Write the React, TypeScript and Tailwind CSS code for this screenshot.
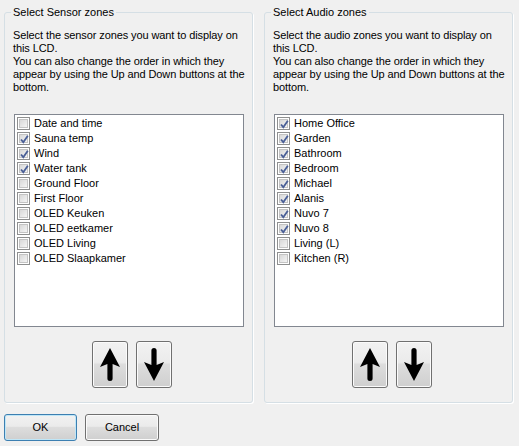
import React, { useState } from 'react';

interface Zone {
  name: string;
  checked: boolean;
}

const sensorZones: Zone[] = [
  { name: 'Date and time', checked: false },
  { name: 'Sauna temp', checked: true },
  { name: 'Wind', checked: true },
  { name: 'Water tank', checked: true },
  { name: 'Ground Floor', checked: false },
  { name: 'First Floor', checked: false },
  { name: 'OLED Keuken', checked: false },
  { name: 'OLED eetkamer', checked: false },
  { name: 'OLED Living', checked: false },
  { name: 'OLED Slaapkamer', checked: false },
];

const audioZones: Zone[] = [
  { name: 'Home Office', checked: true },
  { name: 'Garden', checked: true },
  { name: 'Bathroom', checked: true },
  { name: 'Bedroom', checked: true },
  { name: 'Michael', checked: true },
  { name: 'Alanis', checked: true },
  { name: 'Nuvo 7', checked: true },
  { name: 'Nuvo 8', checked: true },
  { name: 'Living (L)', checked: false },
  { name: 'Kitchen (R)', checked: false },
];

const btnFace =
  'bg-[linear-gradient(to_bottom,#f2f2f2_0%,#ebebeb_45%,#dddddd_50%,#cfcfcf_100%)] shadow-[inset_0_0_0_1px_#fbfbfb]';

const CheckBox: React.FC<{ checked: boolean; onClick: () => void }> = ({ checked, onClick }) => (
  <span
    onClick={onClick}
    className="relative w-[13px] h-[13px] border border-[#8e8f8f] bg-white flex-shrink-0 flex items-center justify-center"
  >
    <span className="w-[9px] h-[9px] border border-[#c4c4c4] bg-[linear-gradient(135deg,#d8d8d8_0%,#f4f4f4_100%)]" />
    {checked && (
      <svg className="absolute left-[1px] top-[1px]" width="11" height="11" viewBox="0 0 11 11">
        <path d="M2 5.5 L4.3 8.2 L8.8 1.8" fill="none" stroke="#4a5f97" strokeWidth="1.8" />
      </svg>
    )}
  </span>
);

const UpArrow = () => (
  <svg width="20" height="33" viewBox="0 0 20 33">
    <path d="M10 0 L20 19 L12.6 16 L12.6 30.5 Q12.6 33 10 33 Q7.4 33 7.4 30.5 L7.4 16 L0 19 Z" fill="#000" />
  </svg>
);

const DownArrow = () => (
  <svg width="20" height="33" viewBox="0 0 20 33">
    <path d="M10 33 L20 14 L12.6 17 L12.6 2.5 Q12.6 0 10 0 Q7.4 0 7.4 2.5 L7.4 17 L0 14 Z" fill="#000" />
  </svg>
);

const ZoneGroup: React.FC<{ title: string; kind: string; initial: Zone[] }> = ({ title, kind, initial }) => {
  const [zones, setZones] = useState<Zone[]>(initial);

  const toggle = (i: number) =>
    setZones((prev) => prev.map((z, idx) => (idx === i ? { ...z, checked: !z.checked } : z)));

  return (
    <fieldset className="w-[249px] h-[397px] border border-[#d5dfe5] rounded-[3px] px-0 m-0 shadow-[1px_1px_0_#ffffff]">
      <legend className="ml-[6px] px-[2px] leading-[13px]">{title}</legend>

      {/* description */}
      <p className="mt-[10px] pl-[8px] leading-[13px] tracking-[-0.1px]">
        Select the {kind} zones you want to display on
        <br />
        this LCD.
        <br />
        You can also change the order in which they
        <br />
        appear by using the Up and Down buttons at the
        <br />
        bottom.
      </p>

      {/* list */}
      <div className="mt-[20px] ml-[9px] w-[230px] h-[213px] border border-[#828790] bg-white pt-[1px]">
        {zones.map((z, i) => (
          <div key={z.name} className="h-[15px] flex items-center pl-[2px] gap-[4px] leading-[15px]">
            <CheckBox checked={z.checked} onClick={() => toggle(i)} />
            <span className="text-black">{z.name}</span>
          </div>
        ))}
      </div>

      {/* up / down */}
      <div className="mt-[14px] pl-[87px] flex gap-[8px]">
        <button className={`w-[36px] h-[47px] border border-[#707070] rounded-[3px] flex items-center justify-center ${btnFace}`}>
          <UpArrow />
        </button>
        <button className={`w-[36px] h-[47px] border border-[#707070] rounded-[3px] flex items-center justify-center ${btnFace}`}>
          <DownArrow />
        </button>
      </div>
    </fieldset>
  );
};

export default function App() {
  return (
    <div className="w-[519px] h-[446px] bg-[#f0f0f0] text-[11px] text-black font-['Liberation_Sans',Arial,sans-serif] pl-[4px] pt-[6px]">
      <div className="flex gap-[11px]">
        <ZoneGroup title="Select Sensor zones" kind="sensor" initial={sensorZones} />
        <ZoneGroup title="Select Audio zones" kind="audio" initial={audioZones} />
      </div>

      <div className="mt-[11px] flex gap-[8px]">
        <button
          className="w-[73px] h-[27px] border border-[#3c7fb1] rounded-[3px] bg-[linear-gradient(to_bottom,#f2f2f2_0%,#ebebeb_45%,#dddddd_50%,#cfcfcf_100%)] shadow-[inset_0_0_0_1px_#bfe6f7]"
        >
          OK
        </button>
        <button className={`w-[74px] h-[27px] border border-[#707070] rounded-[3px] ${btnFace}`}>Cancel</button>
      </div>
    </div>
  );
}
